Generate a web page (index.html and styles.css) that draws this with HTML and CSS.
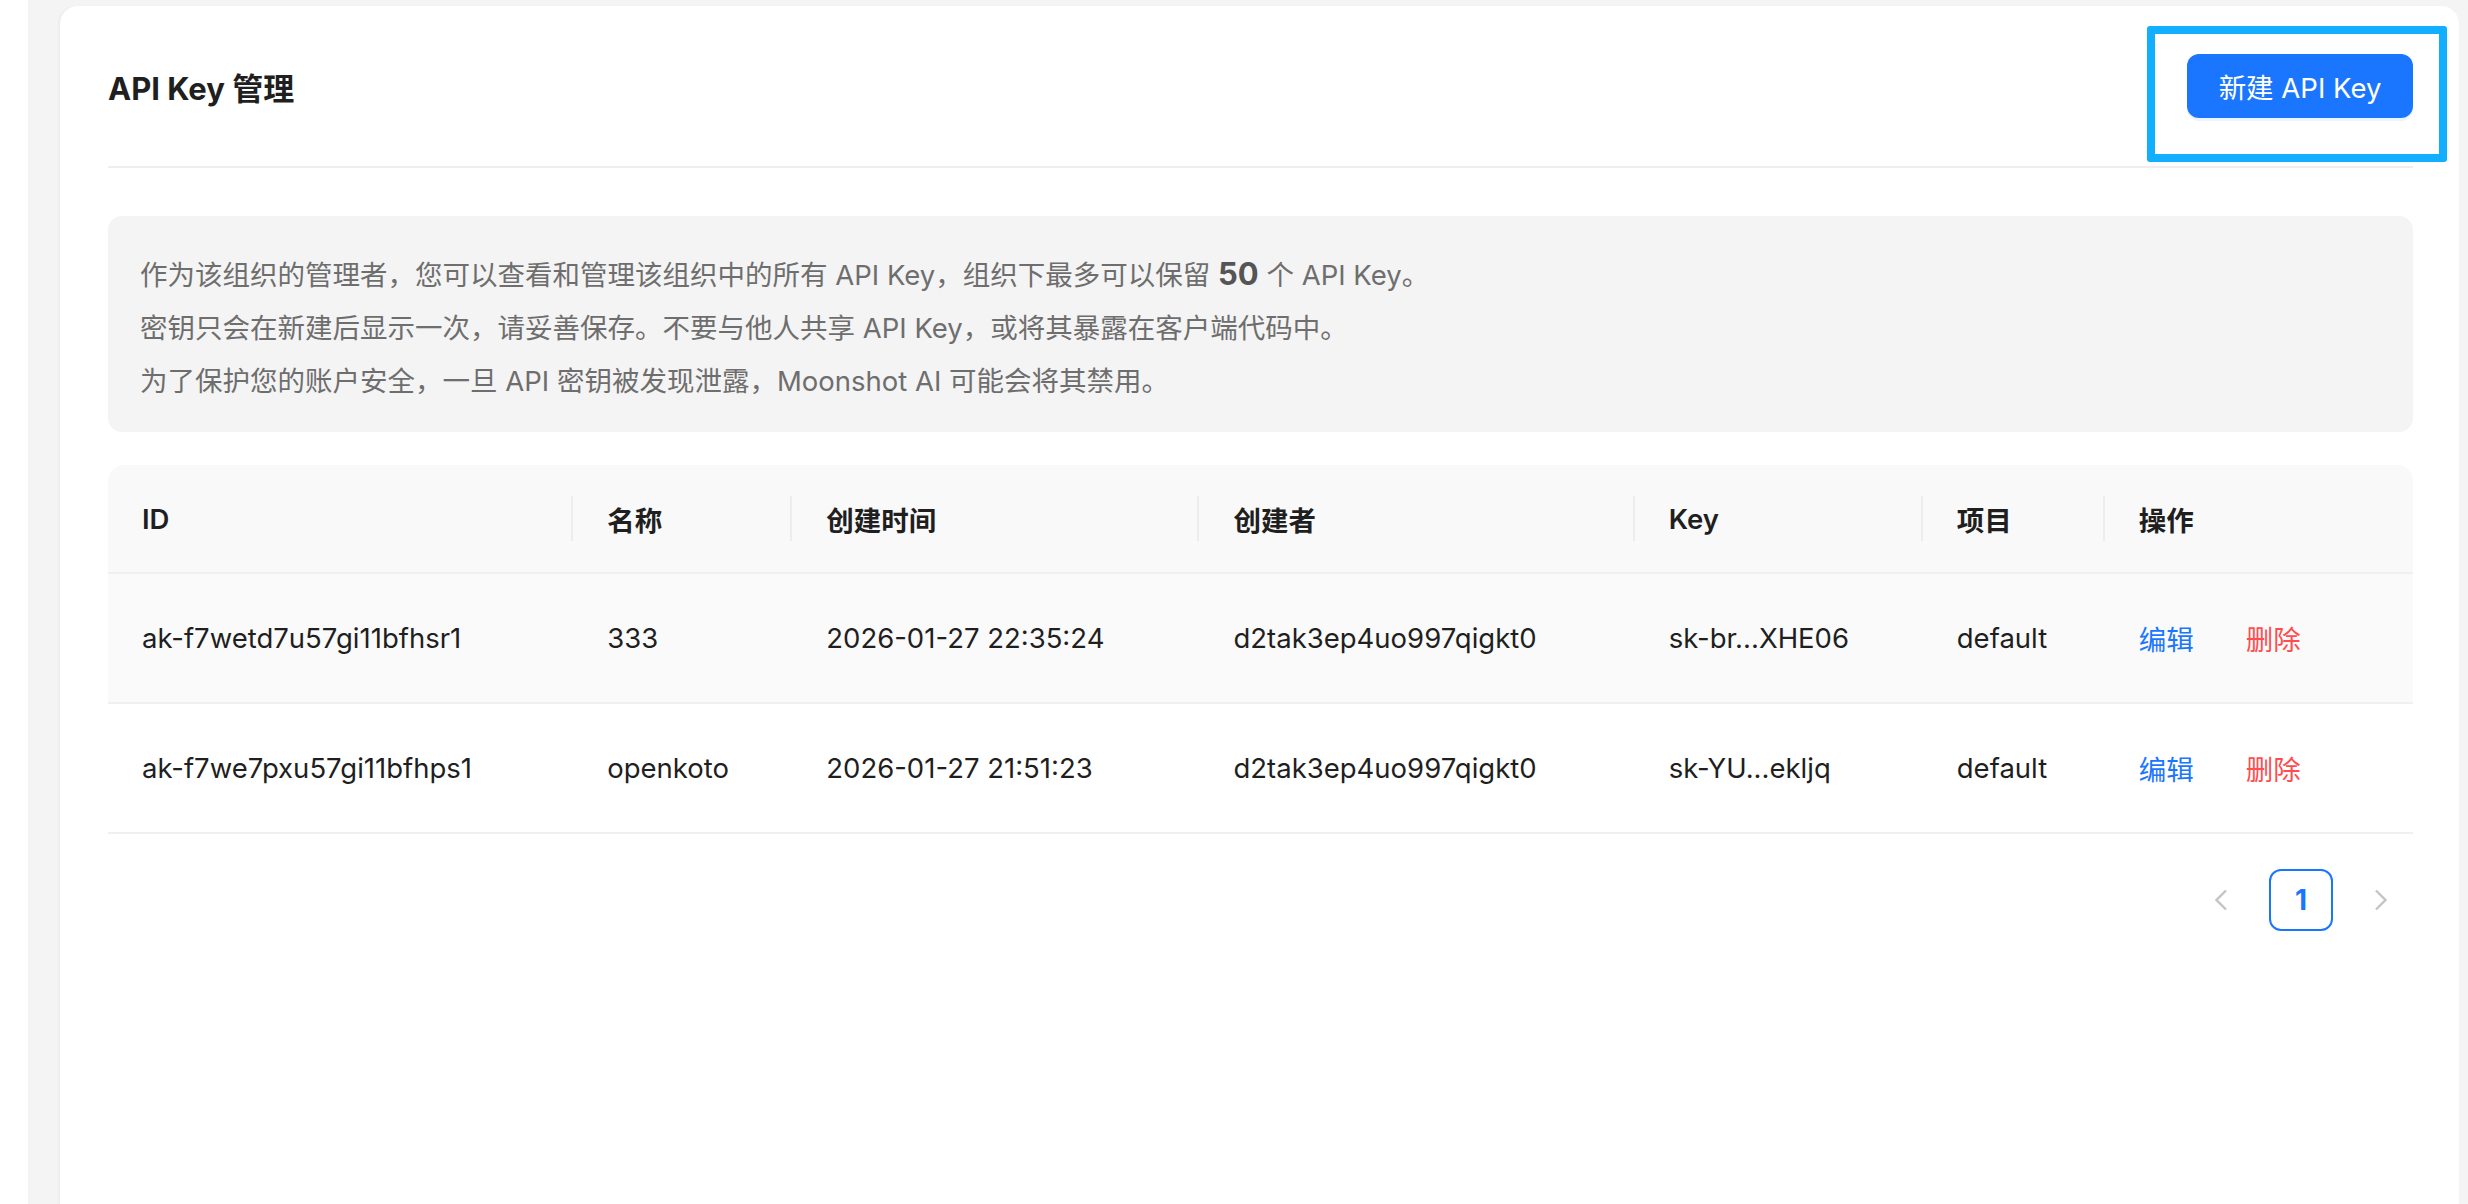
FILE: index.html
```html
<!DOCTYPE html>
<html lang="zh-CN">

<head>
    <meta charset="UTF-8">
    <meta name="viewport" content="width=device-width, initial-scale=1.0">
    <title>API Key 管理</title>
    <link rel="stylesheet" href="styles.css">
</head>

<body>
    <div class="layout">
        <div class="side"></div>

        <div class="page">
            <div class="card">
                <div class="card-header">
                    <h1 class="title">API Key 管理</h1>
                    <div class="actions">
                        <button class="btn-primary">新建 API Key</button>
                        <div class="mark"></div>
                    </div>
                </div>

                <div class="notice">
                    <p>作为该组织的管理者，您可以查看和管理该组织中的所有 API Key，组织下最多可以保留 <b>50</b> 个 API Key。</p>
                    <p>密钥只会在新建后显示一次，请妥善保存。不要与他人共享 API Key，或将其暴露在客户端代码中。</p>
                    <p>为了保护您的账户安全，一旦 API 密钥被发现泄露，Moonshot AI 可能会将其禁用。</p>
                </div>

                <table class="key-table">
                    <colgroup>
                        <col class="c-id">
                        <col class="c-name">
                        <col class="c-time">
                        <col class="c-owner">
                        <col class="c-key">
                        <col class="c-project">
                        <col class="c-ops">
                    </colgroup>
                    <thead>
                        <tr>
                            <th>ID</th>
                            <th>名称</th>
                            <th>创建时间</th>
                            <th>创建者</th>
                            <th>Key</th>
                            <th>项目</th>
                            <th>操作</th>
                        </tr>
                    </thead>
                    <tbody>
                        <tr class="hover">
                            <td>ak-f7wetd7u57gi11bfhsr1</td>
                            <td>333</td>
                            <td>2026-01-27 22:35:24</td>
                            <td>d2tak3ep4uo997qigkt0</td>
                            <td>sk-br...XHE06</td>
                            <td>default</td>
                            <td class="ops"><a class="edit">编辑</a><a class="del">删除</a></td>
                        </tr>
                        <tr>
                            <td>ak-f7we7pxu57gi11bfhps1</td>
                            <td>openkoto</td>
                            <td>2026-01-27 21:51:23</td>
                            <td>d2tak3ep4uo997qigkt0</td>
                            <td>sk-YU...ekljq</td>
                            <td>default</td>
                            <td class="ops"><a class="edit">编辑</a><a class="del">删除</a></td>
                        </tr>
                    </tbody>
                </table>

                <div class="pager">
                    <span class="pager-btn disabled">
                        <svg width="14" height="22" viewBox="0 0 14 22"><path d="M12 1.5 2.5 11 12 20.5" fill="none" stroke="#c4c4c4" stroke-width="2.4"/></svg>
                    </span>
                    <span class="pager-item active">1</span>
                    <span class="pager-btn disabled">
                        <svg width="14" height="22" viewBox="0 0 14 22"><path d="M2 1.5 11.5 11 2 20.5" fill="none" stroke="#c4c4c4" stroke-width="2.4"/></svg>
                    </span>
                </div>
            </div>
        </div>
    </div>
</body>

</html>
```

FILE: styles.css
```css
body {
    margin: 0;
    padding: 0;
    background: white;
    font-family: Inter, "Noto Sans CJK SC", sans-serif;
    color: #1f1f1f;
}

.layout {
    display: flex;
    height: 100vh;
    overflow: hidden;
}

.side {
    width: 28px;
    flex-shrink: 0;
    background: white;
}

.page {
    flex: 1;
    background: #f4f4f4;
    padding: 6px 9px 0 32px;
}

.card {
    height: 100%;
    background: #fff;
    border-radius: 18px 18px 0 0;
    padding: 48px 46px 48px 48px;
    box-sizing: border-box;
    box-shadow: -2px 0 2px rgba(0, 0, 0, 0.03);
}

.card-header {
    display: flex;
    align-items: center;
    justify-content: space-between;
    height: 64px;
    padding-bottom: 48px;
    border-bottom: 2px solid #eeeeee;
}

.title {
    margin: 0;
    font-size: 31px;
    font-weight: 700;
    color: #1f1f1f;
}

.actions {
    position: relative;
}

.btn-primary {
    height: 64px;
    width: 226px;
    padding: 0;
    font-family: inherit;
    font-size: 27.5px;
    color: white;
    background-color: #1b76ff;
    border: none;
    border-radius: 12px;
    box-shadow: 0 3px 0 rgba(5, 120, 255, 0.08);
    cursor: pointer;
}

.mark {
    position: absolute;
    top: -28px;
    left: -40px;
    right: -34px;
    bottom: -44px;
    border: 8px solid #12aeff;
    border-radius: 3px;
    pointer-events: none;
}

.notice {
    margin-top: 48px;
    padding: 31px 32px 24px;
    background: #f4f4f4;
    border-radius: 14px;
    color: #6e6e6e;
    font-size: 27.5px;
    line-height: 53px;
}

.notice p {
    margin: 0;
}

.notice b {
    font-size: 31px;
    color: #555;
}

.key-table {
    width: 100%;
    margin-top: 33px;
    border-collapse: separate;
    border-spacing: 0;
    table-layout: fixed;
    font-size: 27.5px;
}

.c-id { width: 465px; }
.c-name { width: 219px; }
.c-time { width: 407px; }
.c-owner { width: 435px; }
.c-key { width: 288px; }
.c-project { width: 182px; }
.c-ops { width: 308px; }

.key-table th {
    position: relative;
    height: 107px;
    padding: 0 34px;
    text-align: left;
    font-weight: 600;
    color: #1f1f1f;
    background: #f9f9f9;
    border-bottom: 2px solid #f0f0f0;
}

.key-table th:first-child {
    border-top-left-radius: 16px;
}

.key-table th:last-child {
    border-top-right-radius: 16px;
}

.key-table th:not(:last-child)::before {
    content: "";
    position: absolute;
    right: 0;
    top: 31px;
    width: 2px;
    height: 45px;
    background: #ededed;
}

.key-table td {
    height: 128px;
    padding: 0 34px;
    color: #1f1f1f;
    border-bottom: 2px solid #f0f0f0;
    white-space: nowrap;
}

.key-table tr.hover td {
    background: #fafafa;
}

.ops a {
    cursor: pointer;
}

.ops .edit {
    color: #1b76ff;
    margin-right: 52px;
}

.ops .del {
    color: #ff4d4f;
}

.pager {
    display: flex;
    justify-content: flex-end;
    gap: 16px;
    margin-top: 35px;
}

.pager-btn,
.pager-item {
    display: flex;
    align-items: center;
    justify-content: center;
    width: 64px;
    height: 62px;
    box-sizing: border-box;
    border-radius: 12px;
}

.pager-item {
    font-size: 28px;
    font-weight: 700;
}

.pager-item.active {
    color: #1b76ff;
    border: 2px solid #1b76ff;
}
```
